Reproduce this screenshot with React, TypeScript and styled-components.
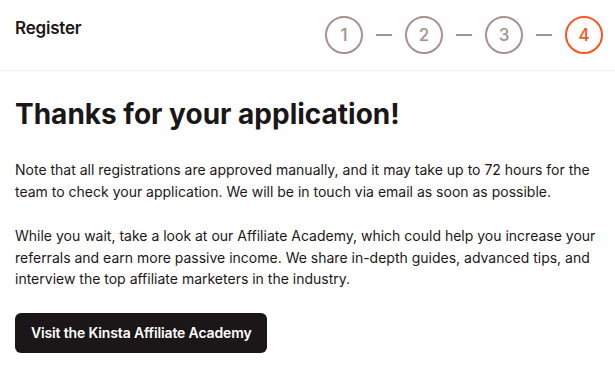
import React from "react";
import styled, { createGlobalStyle } from "styled-components";

const Global = createGlobalStyle`
  html, body { margin: 0; padding: 0; background: #ffffff; }
  body { font-family: Inter, "Noto Sans", sans-serif; color: #1b1718; }
`;

const Page = styled.div`
  width: 615px;
  min-height: 371px;
  background: #ffffff;
`;

const Header = styled.header`
  display: flex;
  justify-content: space-between;
  align-items: flex-start;
  padding: 16px 12px 16px 15px;
  border-bottom: 1px solid #eeeef2;
`;

const Title = styled.div`
  font-size: 17px;
  font-weight: 600;
  line-height: 24px;
  letter-spacing: -0.2px;
  color: #1b1718;
`;

const Steps = styled.div`
  display: flex;
  align-items: center;
`;

const Step = styled.div<{ $active?: boolean }>`
  width: 38px;
  height: 38px;
  box-sizing: border-box;
  border-radius: 50%;
  border: 2px solid ${(p) => (p.$active ? "#fa5520" : "#a7918c")};
  color: ${(p) => (p.$active ? "#fa5520" : "#a7918c")};
  display: flex;
  align-items: center;
  justify-content: center;
  font-size: 17px;
  font-weight: 500;
`;

const Dash = styled.div`
  width: 16px;
  height: 2px;
  margin: 0 13px;
  background: #a7918c;
`;

const Content = styled.main`
  padding: 26px 15px 0 15px;
`;

const Heading = styled.h1`
  margin: 0 0 28px;
  font-size: 28px;
  line-height: 34px;
  font-weight: 700;
  color: #1b1718;
`;

const Para = styled.p`
  margin: 0 0 23px;
  font-size: 14px;
  line-height: 21.5px;
  color: #1b1718;
`;

const Button = styled.a`
  display: inline-flex;
  align-items: center;
  height: 40px;
  padding: 0 16px;
  border-radius: 6px;
  background: #1b1718;
  color: #ffffff;
  font-size: 14px;
  font-weight: 600;
  letter-spacing: -0.15px;
  text-decoration: none;
`;

export default function App() {
  const steps = [1, 2, 3, 4];
  return (
    <Page>
      <Global />
      <Header>
        <Title>Register</Title>
        <Steps>
          {steps.map((n, i) => (
            <React.Fragment key={n}>
              {i > 0 && <Dash />}
              <Step $active={n === 4}>{n}</Step>
            </React.Fragment>
          ))}
        </Steps>
      </Header>
      <Content>
        <Heading>Thanks for your application!</Heading>
        <Para>
          Note that all registrations are approved manually, and it may take up to 72 hours for the
          team to check your application. We will be in touch via email as soon as possible.
        </Para>
        <Para>
          While you wait, take a look at our Affiliate Academy, which could help you increase your
          referrals and earn more passive income. We share in-depth guides, advanced tips, and
          interview the top affiliate marketers in the industry.
        </Para>
        <Button href="#">Visit the Kinsta Affiliate Academy</Button>
      </Content>
    </Page>
  );
}
